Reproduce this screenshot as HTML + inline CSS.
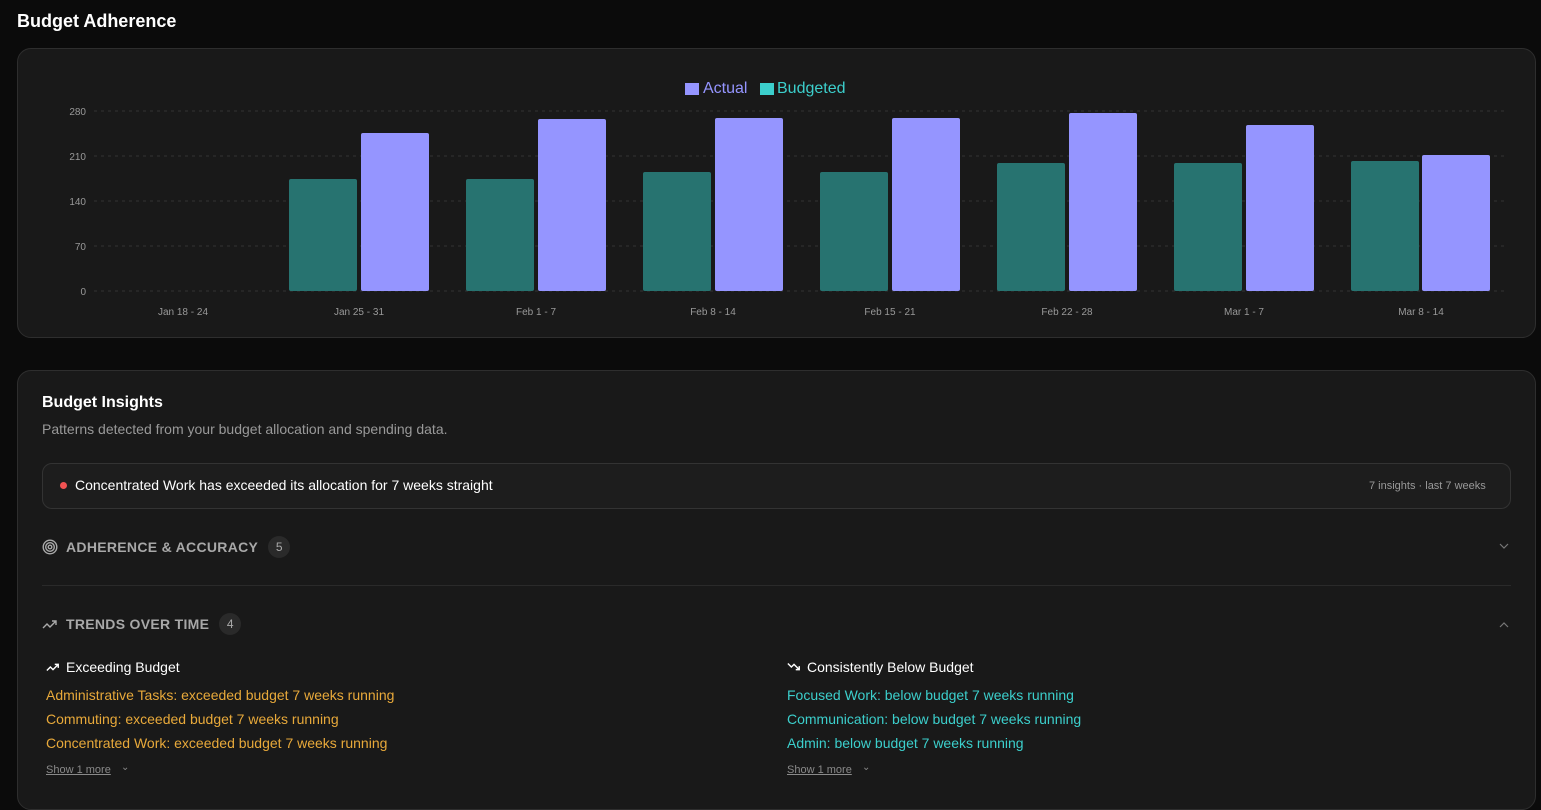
<!DOCTYPE html>
<html><head><meta charset="utf-8"><style>
*{box-sizing:border-box;margin:0;padding:0}
body{width:1541px;height:788px;overflow:hidden;background:#0b0b0b;font-family:"Liberation Sans",sans-serif;color:#fff;position:relative}
.abs{position:absolute}
.card{position:absolute;background:#191919;border:1px solid #2e2e2e;border-radius:14px}
.badge{display:inline-block;background:#2a2a2a;color:#aaa;border-radius:11px;font-size:12px;width:22px;height:22px;line-height:22px;text-align:center;font-weight:normal;letter-spacing:0}
.sec{position:absolute;left:42px;font-size:14px;font-weight:bold;letter-spacing:0.3px;color:#a8a8a8;display:flex;align-items:center;gap:8px}
.li{position:absolute;font-size:14px}
.show{position:absolute;font-size:11px;color:#8a8a8a;text-decoration:underline}
</style></head><body>
<div class="abs" style="left:17px;top:11px;font-size:18px;font-weight:bold">Budget Adherence</div>
<div class="card" style="left:17px;top:48px;width:1519px;height:290px"></div>
<svg class="abs" style="left:0;top:0" width="1541" height="340">
<rect x="685" y="83" width="14" height="12" fill="#9595ff"/>
<text x="703" y="93" font-size="16" fill="#9595ff" font-family="Liberation Sans">Actual</text>
<rect x="760" y="83" width="14" height="12" fill="#3ccfcc"/>
<text x="777" y="93" font-size="16" fill="#3ccfcc" font-family="Liberation Sans">Budgeted</text>
<g stroke="#333" stroke-dasharray="3 4" stroke-width="1">
<line x1="94" y1="111" x2="1507" y2="111"/><line x1="94" y1="156" x2="1507" y2="156"/><line x1="94" y1="201" x2="1507" y2="201"/><line x1="94" y1="246" x2="1507" y2="246"/><line x1="94" y1="291" x2="1507" y2="291"/></g>
<g font-size="10" fill="#999" text-anchor="end" font-family="Liberation Sans">
<text x="86" y="115">280</text><text x="86" y="160">210</text><text x="86" y="205">140</text><text x="86" y="250">70</text><text x="86" y="295">0</text></g>
<g fill="#277370">
<rect x="289" y="179" width="68" height="112" rx="2"/>
<rect x="466" y="179" width="68" height="112" rx="2"/>
<rect x="643" y="172" width="68" height="119" rx="2"/>
<rect x="820" y="172" width="68" height="119" rx="2"/>
<rect x="997" y="163" width="68" height="128" rx="2"/>
<rect x="1174" y="163" width="68" height="128" rx="2"/>
<rect x="1351" y="161" width="68" height="130" rx="2"/></g>
<g fill="#9595ff">
<rect x="361" y="133" width="68" height="158" rx="2"/>
<rect x="538" y="119" width="68" height="172" rx="2"/>
<rect x="715" y="118" width="68" height="173" rx="2"/>
<rect x="892" y="118" width="68" height="173" rx="2"/>
<rect x="1069" y="113" width="68" height="178" rx="2"/>
<rect x="1246" y="125" width="68" height="166" rx="2"/>
<rect x="1422" y="155" width="68" height="136" rx="2"/></g>
<g font-size="10" fill="#999" text-anchor="middle" font-family="Liberation Sans">
<text x="183" y="315">Jan 18 - 24</text><text x="359" y="315">Jan 25 - 31</text><text x="536" y="315">Feb 1 - 7</text><text x="713" y="315">Feb 8 - 14</text><text x="890" y="315">Feb 15 - 21</text><text x="1067" y="315">Feb 22 - 28</text><text x="1244" y="315">Mar 1 - 7</text><text x="1421" y="315">Mar 8 - 14</text></g>
</svg>

<div class="card" style="left:17px;top:370px;width:1519px;height:440px"></div>
<div class="abs" style="left:42px;top:394px;font-size:16px;font-weight:bold">Budget Insights</div>
<div class="abs" style="left:42px;top:421px;font-size:14px;color:#999">Patterns detected from your budget allocation and spending data.</div>
<div class="abs" style="left:42px;top:463px;width:1469px;height:46px;border:1px solid #333;border-radius:10px;background:#1d1d1d"></div>
<div class="abs" style="left:60px;top:482px;width:7px;height:7px;border-radius:50%;background:#f05252"></div>
<div class="abs" style="left:75px;top:477px;font-size:14px">Concentrated Work has exceeded its allocation for 7 weeks straight</div>
<div class="abs" style="left:1369px;top:480px;font-size:11px;color:#999">7 insights · last 7 weeks</div>

<div class="sec" style="top:536px">
<svg width="16" height="16" viewBox="0 0 16 16" fill="none" stroke="#aaa" stroke-width="1.4"><circle cx="8" cy="8" r="6.8"/><circle cx="8" cy="8" r="4.3"/><circle cx="8" cy="8" r="1.8"/></svg>
<span>ADHERENCE &amp; ACCURACY</span><span class="badge" style="margin-left:2px">5</span></div>
<svg class="abs" style="left:1499px;top:543px" width="10" height="7"><path d="M1 1l4 4 4-4" fill="none" stroke="#777" stroke-width="1.2"/></svg>
<div class="abs" style="left:42px;top:585px;width:1469px;height:1px;background:#2a2a2a"></div>

<div class="sec" style="top:613px">
<svg width="16" height="16" viewBox="0 0 16 16" fill="none" stroke="#aaa" stroke-width="1.4"><path d="M1 12l4-4 3 3 6-6M10 5h4v4"/></svg>
<span>TRENDS OVER TIME</span><span class="badge" style="margin-left:2px">4</span></div>
<svg class="abs" style="left:1499px;top:621px" width="10" height="7"><path d="M1 6l4-4 4 4" fill="none" stroke="#777" stroke-width="1.2"/></svg>

<div class="abs" style="left:46px;top:659px;font-size:14px;display:flex;gap:6px;align-items:center"><svg width="14" height="14" viewBox="0 0 16 16" fill="none" stroke="#fff" stroke-width="1.6"><path d="M1 12l4-4 3 3 6-6M10 5h4v4"/></svg>Exceeding Budget</div>
<div class="li" style="left:46px;top:687px;color:#e8a93a">Administrative Tasks: exceeded budget 7 weeks running</div>
<div class="li" style="left:46px;top:711px;color:#e8a93a">Commuting: exceeded budget 7 weeks running</div>
<div class="li" style="left:46px;top:735px;color:#e8a93a">Concentrated Work: exceeded budget 7 weeks running</div>
<div class="show" style="left:46px;top:764px">Show 1 more</div><div class="abs" style="left:121px;top:762px;font-size:10px;color:#888">⌄</div>

<div class="abs" style="left:787px;top:659px;font-size:14px;display:flex;gap:6px;align-items:center"><svg width="14" height="14" viewBox="0 0 16 16" fill="none" stroke="#fff" stroke-width="1.6"><path d="M1 4l4 4 3-3 6 6M10 11h4V7"/></svg>Consistently Below Budget</div>
<div class="li" style="left:787px;top:687px;color:#3ccfcc">Focused Work: below budget 7 weeks running</div>
<div class="li" style="left:787px;top:711px;color:#3ccfcc">Communication: below budget 7 weeks running</div>
<div class="li" style="left:787px;top:735px;color:#3ccfcc">Admin: below budget 7 weeks running</div>
<div class="show" style="left:787px;top:764px">Show 1 more</div><div class="abs" style="left:862px;top:762px;font-size:10px;color:#888">⌄</div>
</body></html>
